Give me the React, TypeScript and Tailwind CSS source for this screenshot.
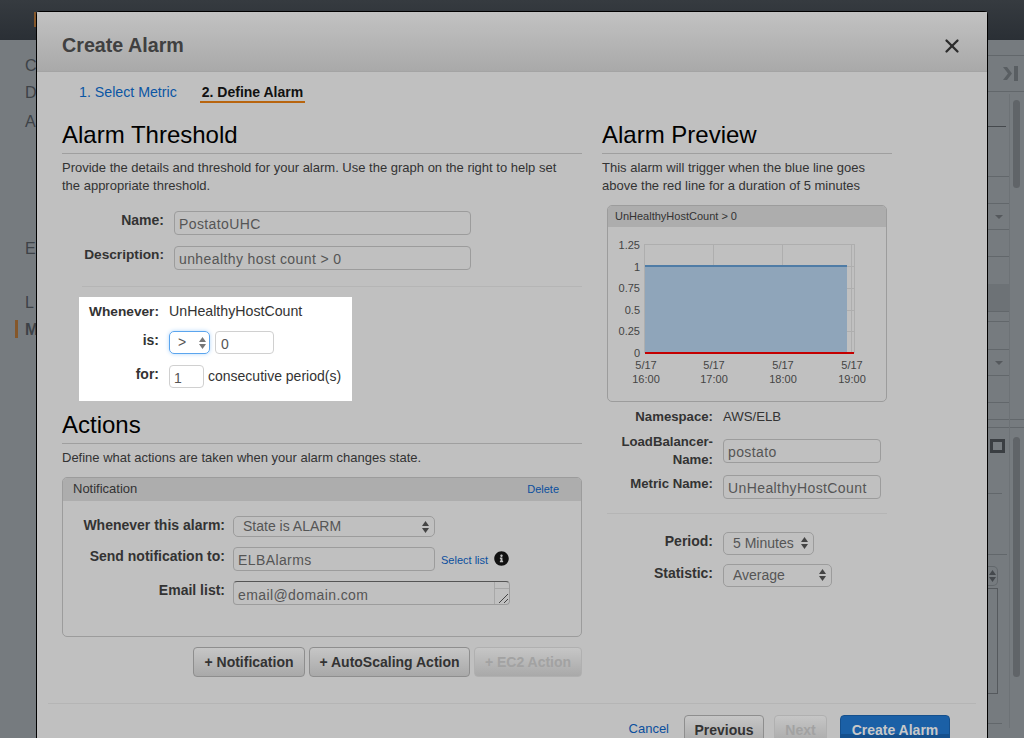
import { X } from 'lucide-react';
import { FaInfoCircle } from 'react-icons/fa';

function Stepper({ color = '#444' }: { color?: string }) {
  return (
    <svg width="7" height="12" viewBox="0 0 7 12" fill={color} className="shrink-0">
      <path d="M3.5 0 7 5H0z" />
      <path d="M0 7h7l-3.500 5z" />
    </svg>
  );
}

function SelectBox({ value, className }: { value: string; className: string }) {
  return (
    <div
      className={`flex items-center justify-between rounded-[5px] border border-[#9c9c9c] pl-[9px] pr-[5px] text-[14px] text-[#555] ${className}`}
    >
      <span>{value}</span>
      <Stepper />
    </div>
  );
}

function TextInput({ value, className }: { value: string; className: string }) {
  return (
    <input
      readOnly
      value={value}
      className={`rounded-[4px] border border-[#9c9c9c] bg-transparent px-[4px] pt-[2px] text-[14px] tracking-[0.4px] text-[#555] outline-none ${className}`}
    />
  );
}

function Heading({ children }: { children: string }) {
  return (
    <h2 className="h-[34px] border-b border-[#9f9f9f] text-[24px] leading-[30px] text-black">
      {children}
    </h2>
  );
}

function Row({
  label,
  labelClass,
  children,
}: {
  label: string;
  labelClass: string;
  children: React.ReactNode;
}) {
  return (
    <div className="flex items-center">
      <div className={`text-right font-bold text-[#333] ${labelClass}`}>{label}</div>
      {children}
    </div>
  );
}

function Chart() {
  const labels = [
    { x: 38, time: '16:00' },
    { x: 106, time: '17:00' },
    { x: 175, time: '18:00' },
    { x: 244, time: '19:00' },
  ];
  const yTicks = [
    { y: 18, text: '1.25' },
    { y: 40, text: '1' },
    { y: 61, text: '0.75' },
    { y: 83, text: '0.5' },
    { y: 104, text: '0.25' },
    { y: 126, text: '0' },
  ];
  return (
    <svg width="278" height="174" viewBox="0 0 278 174">
      <rect x="36.500" y="17.500" width="210" height="108" fill="none" stroke="#aeaeae" />
      <path
        d="M105.500 17v108M174.500 17v108M243.500 17v108M239 39.500h8M239 61.500h8M239 83.500h8M239 104.500h8"
        stroke="#aeaeae"
      />
      <rect x="37" y="38" width="202" height="88" fill="#8fa5ba" />
      <rect x="37" y="38" width="202" height="2" fill="#4f7ca6" />
      <rect x="37" y="125" width="209" height="2" fill="#c40000" />
      {yTicks.map((t) => (
        <text key={t.text} x="32" y={t.y + 4} textAnchor="end" fontSize="11" fill="#444">
          {t.text}
        </text>
      ))}
      {labels.map((l) => (
        <text key={l.time} textAnchor="middle" fontSize="11" fill="#444">
          <tspan x={l.x} y="142">
            5/17
          </tspan>
          <tspan x={l.x} y="156">
            {l.time}
          </tspan>
        </text>
      ))}
    </svg>
  );
}

function ActionButton({ label, className }: { label: string; className: string }) {
  return (
    <button
      className={`h-[30px] rounded-[4px] border border-[#8e8e8e] bg-gradient-to-b from-[#c6c6c6] to-[#a9a9a9] text-[14px] font-bold ${className}`}
    >
      {label}
    </button>
  );
}

function LeftColumn() {
  return (
    <div className="w-[520px]">
      <Heading>Alarm Threshold</Heading>
      <p className="mt-[5px] text-[13px] leading-[18px] text-[#333]">
        Provide the details and threshold for your alarm. Use the graph on the right to help set
        <br />
        the appropriate threshold.
      </p>
      <div className="mt-[15px]">
        <Row label="Name:" labelClass="mr-[10px] w-[102px] pb-[5px] text-[14px]">
          <TextInput value="PostatoUHC" className="h-[24px] w-[297px]" />
        </Row>
      </div>
      <div className="mt-[10px]">
        <Row label="Description:" labelClass="mr-[10px] w-[102px] pb-[6px] text-[13.700px] leading-[18px]">
          <TextInput value="unhealthy host count > 0" className="h-[24px] w-[297px]" />
        </Row>
      </div>
      <div className="ml-[20px] mt-[16px] border-t border-[#b5b5b5]" />

      <div className="ml-[17px] mt-[10px] h-[104px] w-[273px] bg-white pt-[6px]">
        <div className="flex h-[18px] items-center gap-[10px]">
          <div className="w-[80px] text-right text-[13.700px] font-bold text-[#333]">Whenever:</div>
          <div className="text-[14.200px] text-[#333]">UnHealthyHostCount</div>
        </div>
        <div className="mt-[10px] flex items-start gap-[10px]">
          <div className="w-[80px] text-right text-[14px] font-bold leading-[18px] text-[#333]">
            is:
          </div>
          <div className="flex gap-[5px]">
            <div className="flex h-[23px] w-[41px] items-center justify-between rounded-[5px] border border-[#5ba5ee] pl-[8px] pr-[3px] text-[14px] text-[#555] shadow-[0_0_4px_#b5d8fb]">
              <span>&gt;</span>
              <Stepper color="#777" />
            </div>
            <input
              readOnly
              value="0"
              className="h-[23px] w-[59px] rounded-[4px] border border-[#d0d0d0] bg-white px-[5px] pt-[2px] text-[14px] text-[#555] outline-none"
            />
          </div>
        </div>
        <div className="mt-[10px] flex items-center gap-[10px]">
          <div className="w-[80px] pb-[4px] text-right text-[14px] font-bold text-[#333]">for:</div>
          <input
            readOnly
            value="1"
            className="h-[23px] w-[35px] rounded-[4px] border border-[#d0d0d0] bg-white px-[4px] pt-[2px] text-[14px] text-[#555] outline-none"
          />
          <span className="-ml-[6px] text-[14px] text-[#333]">consecutive period(s)</span>
        </div>
      </div>

      <div className="mt-[9px]">
        <Heading>Actions</Heading>
      </div>
      <p className="mt-[5px] text-[13px] leading-[18px] text-[#333]">
        Define what actions are taken when your alarm changes state.
      </p>

      <div className="mt-[10px] h-[160px] overflow-hidden rounded-[5px] border border-[#9c9c9c]">
        <div className="flex h-[23px] items-center justify-between bg-[#adadad] pb-[1px] pl-[10px] pr-[22px] text-[13px] text-[#333]">
          <span>Notification</span>
          <span className="text-[11px] text-[#0b4f9e]">Delete</span>
        </div>
        <div className="mt-[14px]">
          <Row label="Whenever this alarm:" labelClass="mr-[8px] w-[162px] pb-[2px] text-[14px]">
            <SelectBox value="State is ALARM" className="h-[21px] w-[202px]" />
          </Row>
        </div>
        <div className="mt-[8px] flex items-center">
          <Row label="Send notification to:" labelClass="mr-[8px] w-[162px] pb-[5px] text-[14px]">
            <TextInput value="ELBAlarms" className="h-[24px] w-[202px]" />
          </Row>
          <span className="ml-[6px] mt-[3px] text-[11px] text-[#0b4f9e]">Select list</span>
          <FaInfoCircle className="mb-[1px] ml-[6px] text-[15px] text-[#111]" />
        </div>
        <div className="mt-[8px]">
          <Row label="Email list:" labelClass="mr-[8px] w-[162px] pb-[5px] text-[14px]">
            <div className="relative h-[24px] w-[277px] rounded-[4px] border border-[#9c9c9c] border-t-[#555] pl-[4px] pt-[3px] text-[14px] tracking-[0.4px] text-[#555]">
              email@domain.com
              <div className="absolute bottom-0 right-0 top-0 w-[15px] border-l border-[#a8a8a8]">
                <div className="h-[7px] border-b border-[#a8a8a8]" />
                <svg width="14" height="14" viewBox="0 0 14 14" className="absolute bottom-0 right-0" stroke="#444">
                  <path d="M4 13 13 4M9 13 13 9" />
                </svg>
              </div>
            </div>
          </Row>
        </div>
      </div>

      <div className="mt-[10px] flex justify-end gap-[4px]">
        <ActionButton label="+ Notification" className="w-[112px] text-[#333]" />
        <ActionButton label="+ AutoScaling Action" className="w-[161px] text-[#333]" />
        <ActionButton label="+ EC2 Action" className="w-[108px] border-[#b0b0b0] text-[#a2a2a2]" />
      </div>
    </div>
  );
}

function RightColumn() {
  return (
    <div className="w-[290px]">
      <Heading>Alarm Preview</Heading>
      <p className="mt-[5px] text-[13px] leading-[18px] text-[#333]">
        This alarm will trigger when the blue line goes
        <br />
        above the red line for a duration of 5 minutes
      </p>
      <div className="ml-[5px] mt-[10px] h-[197px] w-[280px] overflow-hidden rounded-[5px] border border-[#9c9c9c]">
        <div className="flex h-[21px] items-center bg-[#adadad] pl-[7px] text-[11px] text-[#333]">
          UnHealthyHostCount &gt; 0
        </div>
        <Chart />
      </div>

      <div className="ml-[5px] mt-[6px] flex h-[18px] items-center gap-[10px]">
        <div className="w-[106px] text-right text-[13.200px] font-bold text-[#333]">Namespace:</div>
        <div className="text-[13.200px] text-[#333]">AWS/ELB</div>
      </div>
      <div className="ml-[5px] mt-[7px] flex items-start gap-[10px]">
        <div className="w-[106px] text-right text-[13.200px] font-bold leading-[18px] text-[#333]">
          LoadBalancer-
          <br />
          Name:
        </div>
        <TextInput value="postato" className="mt-[6px] h-[24px] w-[158px]" />
      </div>
      <div className="ml-[5px] mt-[5px] flex items-center gap-[10px]">
        <div className="w-[106px] pb-[6px] text-right text-[13.200px] font-bold text-[#333]">Metric Name:</div>
        <TextInput value="UnHealthyHostCount" className="h-[24px] w-[158px]" />
      </div>
      <div className="ml-[5px] mt-[13px] w-[280px] border-t border-[#b5b5b5]" />
      <div className="ml-[5px] mt-[17px] flex items-center gap-[10px]">
        <div className="w-[106px] pb-[4px] text-right text-[14px] font-bold text-[#333]">Period:</div>
        <SelectBox value="5 Minutes" className="h-[23px] w-[91px]" />
      </div>
      <div className="ml-[5px] mt-[7px] flex items-center gap-[10px]">
        <div className="w-[106px] pb-[4px] text-right text-[14px] font-bold text-[#333]">Statistic:</div>
        <SelectBox value="Average" className="h-[23px] w-[109px]" />
      </div>
    </div>
  );
}

function Modal() {
  return (
    <div className="absolute left-[36px] top-[11px] h-[760px] w-[952px] rounded-t-[4px] border-x border-t border-black bg-[#c0c0c0]">
      <div className="flex h-[60px] items-center justify-between border-b border-[#a4a4a4] bg-gradient-to-b from-[#c2c2c2] to-[#a9a9a9] pl-[25px] pr-[24px] pt-[8px]">
        <h1 className="text-[19.700px] font-bold text-[#404040]">Create Alarm</h1>
        <X size={22} strokeWidth={2.500} className="text-[#2c2c2c]" />
      </div>
      <div className="flex h-[31px] items-end gap-[23px] pl-[42px]">
        <span className="pb-[3px] text-[14.200px] leading-[16px] text-[#0b56a4]">1. Select Metric</span>
        <span className="border-b-2 border-[#b8650f] px-[2px] pb-[1px] text-[14px] font-bold leading-[16px] text-[#111]">
          2. Define Alarm
        </span>
      </div>
      <div className="mt-[17px] flex gap-[20px] pl-[25px]">
        <LeftColumn />
        <RightColumn />
      </div>
      <div className="mx-[11px] mt-[26px] border-t border-[#b5b5b5]" />
      <div className="mt-[11px] flex items-start justify-end pr-[37px]">
        <span className="mr-[15px] mt-[4px] text-[13px] text-[#0b4f9e]">Cancel</span>
        <button className="mr-[10px] h-[30px] w-[80px] rounded-[4px] border border-[#8e8e8e] bg-gradient-to-b from-[#c6c6c6] to-[#a9a9a9] text-[14px] font-bold text-[#333]">
          Previous
        </button>
        <button className="mr-[13px] h-[30px] w-[53px] rounded-[4px] border border-[#b0b0b0] bg-gradient-to-b from-[#c6c6c6] to-[#a9a9a9] text-[14px] font-bold text-[#a2a2a2]">
          Next
        </button>
        <button className="h-[30px] w-[110px] rounded-[4px] border border-[#15508d] bg-[linear-gradient(#1b60a6_0,#1b60a6_18px,#15508d_18px)] text-[14px] font-bold text-[#c8c8c8]">
          Create Alarm
        </button>
      </div>
    </div>
  );
}

function Caret() {
  return <div className="h-0 w-0 border-x-[4px] border-t-[4px] border-x-transparent border-t-[#55595d]" />;
}

function BackgroundPage() {
  return (
    <div className="flex h-full flex-col">
      <div className="h-[40px] shrink-0 bg-gradient-to-b from-[#363b40] to-[#2a2f35]" />
      <div className="flex flex-1 justify-between">
        <div className="w-[36px] overflow-hidden pl-[25px] text-[16px] text-[#3d4247]">
          <div className="mt-[17px] leading-[18px]">C</div>
          <div className="mt-[9px] leading-[18px]">D</div>
          <div className="mt-[11px] leading-[18px]">A</div>
          <div className="mt-[109px] leading-[18px]">E</div>
          <div className="mt-[36px] leading-[18px]">L</div>
          <div className="relative mt-[9px] font-bold leading-[18px]">M</div>
        </div>
        <div className="relative w-[36px]">
          <div className="h-[16px] border-b border-[#62676b]" />
          <div className="flex h-[36px] items-center justify-end border-b border-[#62676b] pr-[6px]">
            <svg width="15" height="15" viewBox="0 0 15 15" fill="#595e62">
              <path d="M0 1h4l5 6.500-5 6.500H0l5-6.500z" />
              <rect x="11" y="0" width="4" height="15" />
            </svg>
          </div>
          <div className="h-[35px] w-[18px] border-b border-[#45494d]" />
          <div className="h-[50px] w-[21px] border-b border-[#62676b]" />
          <div className="h-[27px] w-[21px] border-b border-[#62676b]" />
          <div className="flex h-[26px] w-[21px] items-center justify-center border-b border-[#62676b]">
            <Caret />
          </div>
          <div className="h-[27px] w-[21px] border-b border-[#62676b]" />
          <div className="h-[27px] w-[21px]" />
          <div className="h-[28px] w-[21px] border-b border-[#62676b] bg-[#6d7276]" />
          <div className="h-[10px] w-[21px] border-b border-[#62676b]" />
          <div className="h-[28px] w-[21px] border-b border-[#62676b]" />
          <div className="flex h-[26px] w-[21px] items-center justify-center border-b border-[#62676b]">
            <Caret />
          </div>
          <div className="h-[27px] w-[21px] border-b border-[#62676b]" />
          <div className="h-[17px] border-b border-[#62676b]" />
          <div className="h-[8px] border-b border-[#62676b]" />
          <div className="ml-[2px] mt-[11px] h-[14px] w-[15px] border-[3px] border-[#3a3e42]" />
          <div className="mt-[40px] h-0 w-[14px] border-b border-[#62676b]" />
          <div className="mt-[60px] h-0 w-[19px] border-b border-[#62676b]" />
          <div className="mt-[11px] flex h-[20px] w-[10px] items-center justify-center rounded-r-[5px] border-y border-r border-[#62676b]">
            <Stepper color="#45494d" />
          </div>
          <div className="mt-[2px] h-[106px] w-[10px] border-y border-r border-[#55595d]" />
          <div className="mt-[29px] h-0 w-[14px] border-b border-[#62676b]" />

          <div className="absolute bottom-[10px] left-[21px] top-[54px] w-[15px] border-l border-[#6d7276]" />
          <div className="absolute left-[25px] top-[60px] h-[88px] w-[7px] rounded-full bg-[#606468]" />
          <div className="absolute left-[25px] top-[397px] h-[240px] w-[7px] rounded-full bg-[#606468]" />
        </div>
      </div>
    </div>
  );
}

export default function App() {
  return (
    <div className="relative h-[738px] w-[1024px] overflow-hidden bg-[#767b7f] font-['Liberation_Sans',Arial,sans-serif]">
      <BackgroundPage />
      <div className="absolute left-[15px] top-[320px] h-[18px] w-[3px] bg-[#85572a]" />
      <div className="absolute left-[34px] top-[12px] h-[15px] w-[2px] bg-[#85572a]" />
      <Modal />
    </div>
  );
}
